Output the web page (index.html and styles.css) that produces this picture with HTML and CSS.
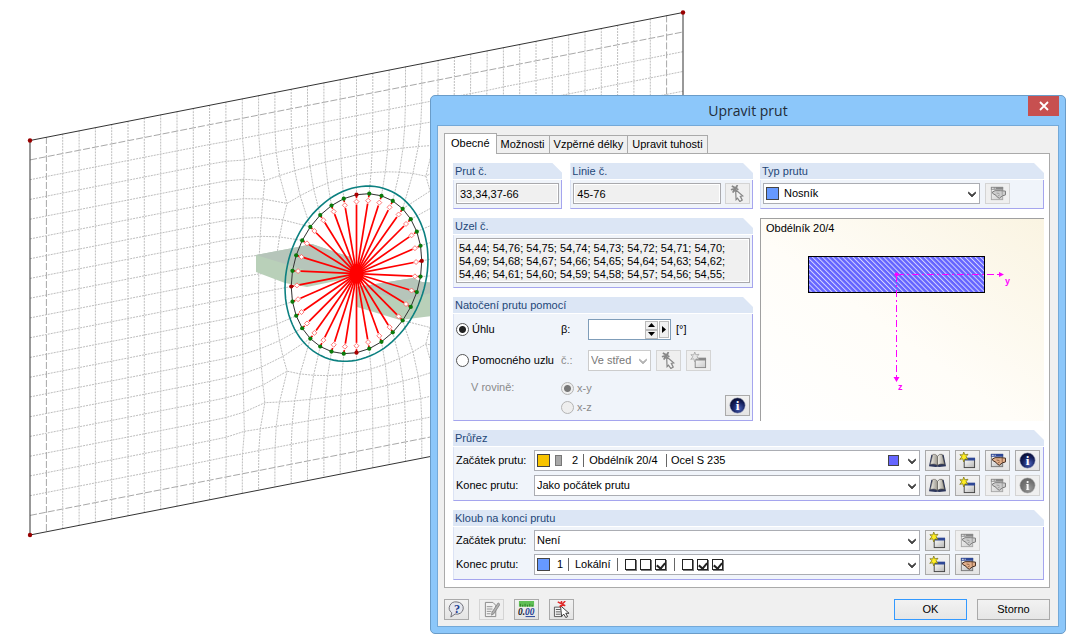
FILE: index.html
```html
<!DOCTYPE html>
<html lang="cs">
<head>
<meta charset="utf-8">
<title>Upravit prut</title>
<link rel="stylesheet" href="styles.css">
</head>
<body>
<svg class="defs" aria-hidden="true">
  <defs>
    <linearGradient id="pane" x1="0" y1="0" x2="1" y2="1"><stop offset="0" stop-color="#fff"/><stop offset="1" stop-color="#b4b4b4"/></linearGradient>
    <linearGradient id="page" x1="0" x2="1"><stop offset="0" stop-color="#f4f2ec"/><stop offset="1" stop-color="#9a968c"/></linearGradient>
    <radialGradient id="ball" cx=".6" cy=".7" r=".7"><stop offset="0" stop-color="#4a62b8"/><stop offset=".6" stop-color="#141f5c"/><stop offset="1" stop-color="#070c30"/></radialGradient>
    <symbol id="i-pick" viewBox="0 0 18 18"><path d="M3 1l7 4M9 0L5 7M2 5l7-2M4 8l3-6" stroke="#4a4438" stroke-width="1.800" fill="none"/><path d="M7 5l7.500 6.500-2.500.500 2 4-2.500 1.500-2.500-3.500-1.500 1.500z" fill="#f4f4f0" stroke="#4a4438" stroke-width="1.300"/></symbol>
    <symbol id="i-new" viewBox="0 0 18 18"><rect x="5.500" y="7.500" width="11" height="9" fill="url(#pane)" stroke="#444"/><path d="M5 6h12v3H5z" fill="#2e4796"/><path d="M5 0l1.200 3 3.300-.6-2 2.700 1.800 2.600-3-.4L5 10.500 4 7.200l-3.200.6 2.200-2.700-2-2.300 3 .3z" fill="#ffee22" stroke="#7c7414" stroke-width=".8"/></symbol>
    <symbol id="i-edit" viewBox="0 0 18 18"><rect x="2.500" y="2.500" width="12" height="13" fill="url(#pane)" stroke="#777"/><path d="M2 2h13v3H2z" fill="#2e4796"/><path d="M3 3.500h2M6 3.500h1" stroke="#fff"/><path d="M3.500 7.500l3-1.500h6l5 .5v4l-3.500 1-3 2.500-2-1-1.500-2-3.500-2z" fill="#e2b08c" stroke="#3c2418"/><path d="M8 8.500l3 .5M9.500 11.500l2-1M14 6.500v4" stroke="#7c4c30" stroke-width=".8"/></symbol>
    <symbol id="i-book" viewBox="0 0 18 18"><path d="M0 15L2.500 3l6 1 .5 11.500-2 .5zM18 15L15.500 3l-6 1L9 15.500l2 .5z" fill="#2c365c"/><path d="M1.500 13L4 2.500q3-1 5 2V14q-3-2-7.500-1z" fill="url(#page)" stroke="#66625a" stroke-width=".6"/><path d="M16.500 13L14 2.500q-3-1-5 2V14q3-2 7.500-1z" fill="url(#page)" stroke="#44413a" stroke-width=".6"/></symbol>
    <symbol id="i-info" viewBox="0 0 18 18"><circle cx="9" cy="9" r="8.200" fill="url(#ball)" stroke="#c4c8d8" stroke-width=".6"/><text x="9" y="14" text-anchor="middle" class="glyph-info">i</text></symbol>
    <symbol id="i-help" viewBox="0 0 18 18"><path d="M9.500 1a7 6.500 0 1 1-2 12.800L3 17l1-4.500A7 6.500 0 0 1 9.500 1z" fill="#e4e6ee" stroke="#6c6c74"/><text x="9.500" y="12.500" text-anchor="middle" class="glyph-help">?</text></symbol>
    <symbol id="i-note" viewBox="0 0 18 18"><path d="M2.500 1.500h8l3 3v12h-11z" fill="#f4f4f0" stroke="#44423a"/><path d="M4 6h6M4 8.500h6M4 11h5M4 13.500h4" stroke="#55534a"/><path d="M16 2l2 1.500-6.500 10L9 15l.5-3z" fill="#8a887c" stroke="#33312a" stroke-width=".8"/></symbol>
    <symbol id="i-units" viewBox="0 0 18 18"><path d="M1 0h16v6H1z" fill="#5fbf55"/><path d="M2.500 3v3M5 4v2M7.500 3v3M10 4v2M12.500 3v3M15 4v2" stroke="#2a7a24"/><text x="0" y="15" class="glyph-units">0.<tspan fill="#1c3a90">00</tspan></text><path d="M8 16.500h10" stroke="#1c3a90"/></symbol>
    <symbol id="i-clear" viewBox="0 0 18 18"><path d="M1.500 6.500h8v10h-8z" fill="#f4f4f4" stroke="#555"/><path d="M3 9h5M3 11.500h5M3 14h5" stroke="#555"/><path d="M8 5l9 8h-3.500l2 3.500-2 1-2-3.500L9 16z" fill="#fff" stroke="#333"/><path d="M5 1l8 4M13 0L7 6M9 0v6" stroke="#e02828" stroke-width="1.600"/></symbol>
    <symbol id="i-chev" viewBox="0 0 10 10"><path d="M1.500 3v1.500L5 8l3.500-3.500V3L5 6z" fill="#444" stroke="#444" stroke-width=".8"/></symbol>
    <pattern id="hatch" width="3.600" height="3.600" patternUnits="userSpaceOnUse" patternTransform="rotate(-45)"><rect width="4" height="4" fill="#6464ff"/><path d="M.5 0v4" stroke="#d4d4ff"/></pattern>
  </defs>
</svg>

<main class="workspace">
  <svg class="model" width="700" height="560" viewBox="0 0 700 560" role="img" aria-label="Model">
    <g id="mesh" class="mesh"></g>
    <path class="edge" d="M30 140.500L683 12.500V407L30 535z"/>
    <g class="node-end"><circle cx="30" cy="140.500" r="2.200"/><circle cx="30" cy="535" r="2.200"/><circle cx="683" cy="12.500" r="2.200"/></g>
    <g id="wheel"></g>
  </svg>

  <section class="dialog" role="dialog" aria-labelledby="dlg-title">
    <header class="titlebar">
      <h1 id="dlg-title">Upravit prut</h1>
      <button class="close" type="button" aria-label="Zavřít"><svg width="10" height="10" viewBox="0 0 10 10"><path d="M1 1l8 8M9 1L1 9" stroke="#fff" stroke-width="1.800"/></svg></button>
    </header>
    <form class="content">
      <nav class="tabs" role="tablist">
        <button type="button" role="tab" aria-selected="true" class="tab active">Obecné</button>
        <button type="button" role="tab" class="tab">Možnosti</button>
        <button type="button" role="tab" class="tab">Vzpěrné délky</button>
        <button type="button" role="tab" class="tab">Upravit tuhosti</button>
      </nav>

      <div class="panel">
        <div class="upper">
          <div class="stack">
            <div class="pair">
              <section class="group"><h2><label for="prut">Prut č.</label></h2>
                <div class="body line"><input id="prut" class="field" readonly value="33,34,37-66"></div></section>
              <section class="group"><h2><label for="linie">Linie č.</label></h2>
                <div class="body line"><input id="linie" class="field" readonly value="45-76"><button type="button" class="tool" disabled aria-label="Vybrat"><svg class="ico"><use href="#i-pick"/></svg></button></div></section>
            </div>
            <section class="group"><h2><label for="uzel">Uzel č.</label></h2>
              <div class="body"><textarea id="uzel" class="field area" readonly>54,44; 54,76; 54,75; 54,74; 54,73; 54,72; 54,71; 54,70;
54,69; 54,68; 54,67; 54,66; 54,65; 54,64; 54,63; 54,62;
54,46; 54,61; 54,60; 54,59; 54,58; 54,57; 54,56; 54,55;</textarea></div></section>
            <section class="group"><h2>Natočení prutu pomocí</h2>
              <div class="body rotation">
                <label class="radio"><input type="radio" name="mode" checked>Úhlu</label>
                <label for="beta">β:</label>
                <div class="controls">
                  <span class="spin"><input id="beta" type="text"><span class="steps"><button type="button" aria-label="Více"><svg width="7" height="4"><path d="M0 4l3.500-4L7 4z"/></svg></button><button type="button" aria-label="Méně"><svg width="7" height="4"><path d="M0 0l3.500 4L7 0z"/></svg></button></span><button type="button" class="more" aria-label="Další"><svg width="4" height="7"><path d="M0 0l4 3.500L0 7z"/></svg></button></span>
                  <span>[°]</span>
                </div>
                <label class="radio"><input type="radio" name="mode">Pomocného uzlu</label>
                <label for="cislo" class="dim">č.:</label>
                <div class="controls">
                  <span class="combo small"><select id="cislo" disabled><option>Ve střed</option></select><svg class="chev"><use href="#i-chev"/></svg></span>
                  <button type="button" class="tool" disabled aria-label="Vybrat uzel"><svg class="ico"><use href="#i-pick"/></svg></button>
                  <button type="button" class="tool" disabled aria-label="Nový uzel"><svg class="ico"><use href="#i-new"/></svg></button>
                </div>
                <span class="dim plane">V rovině:</span>
                <div class="planes">
                  <label class="radio dim"><input type="radio" name="plane" checked disabled>x-y</label>
                  <label class="radio dim"><input type="radio" name="plane" disabled>x-z</label>
                </div>
                <button type="button" class="tool info" aria-label="Informace"><svg class="ico"><use href="#i-info"/></svg></button>
              </div></section>
          </div>

          <div class="stack">
            <section class="group"><h2><label for="typ">Typ prutu</label></h2>
              <div class="body line type">
                <span class="combo"><span class="lead"><i class="sw blue"></i></span><select id="typ" class="after-swatch"><option>Nosník</option></select><svg class="chev"><use href="#i-chev"/></svg></span>
                <button type="button" class="tool" disabled aria-label="Upravit typ"><svg class="ico"><use href="#i-edit"/></svg></button>
              </div></section>
            <figure class="preview">
              <figcaption>Obdélník 20/4</figcaption>
              <svg width="270" height="160" viewBox="0 0 270 160" aria-hidden="true">
                <rect x="47.500" y="19.500" width="176" height="36" fill="url(#hatch)" stroke="#000"/>
                <g stroke="#ff00ff" fill="none" stroke-dasharray="7 3 2 3"><path d="M136 37.500h102"/><path d="M135.500 38v102"/></g>
                <g fill="#ff00ff"><circle cx="135.500" cy="37.500" r="2"/><path d="M238 35l5 2.500-5 2.500zM132.500 140l3 5 3-5z"/></g>
                <g class="axis"><text x="244" y="47">y</text><text x="137" y="153">z</text></g>
              </svg>
            </figure>
          </div>
        </div>

        <section class="group"><h2>Průřez</h2>
          <div class="body rows">
            <label for="pr1">Začátek prutu:</label>
            <span class="combo"><span class="lead"><i class="sw gold"></i><i class="bar"></i><span class="num wide">2</span><span class="cell">Obdélník 20/4</span></span><select id="pr1" class="after-section"><option>Ocel S 235</option></select><i class="sw violet trail"></i><svg class="chev"><use href="#i-chev"/></svg></span>
            <div class="tools"><button type="button" class="tool" aria-label="Knihovna"><svg class="ico"><use href="#i-book"/></svg></button><button type="button" class="tool" aria-label="Nový"><svg class="ico"><use href="#i-new"/></svg></button><button type="button" class="tool" aria-label="Upravit"><svg class="ico"><use href="#i-edit"/></svg></button><button type="button" class="tool" aria-label="Informace"><svg class="ico"><use href="#i-info"/></svg></button></div>
            <label for="pr2">Konec prutu:</label>
            <span class="combo"><select id="pr2"><option>Jako počátek prutu</option></select><svg class="chev"><use href="#i-chev"/></svg></span>
            <div class="tools"><button type="button" class="tool" aria-label="Knihovna"><svg class="ico"><use href="#i-book"/></svg></button><button type="button" class="tool" aria-label="Nový"><svg class="ico"><use href="#i-new"/></svg></button><button type="button" class="tool" disabled aria-label="Upravit"><svg class="ico"><use href="#i-edit"/></svg></button><button type="button" class="tool" disabled aria-label="Informace"><svg class="ico"><use href="#i-info"/></svg></button></div>
          </div></section>

        <section class="group"><h2>Kloub na konci prutu</h2>
          <div class="body rows tight">
            <label for="kl1">Začátek prutu:</label>
            <span class="combo"><select id="kl1"><option>Není</option></select><svg class="chev"><use href="#i-chev"/></svg></span>
            <div class="tools"><button type="button" class="tool" aria-label="Nový"><svg class="ico"><use href="#i-new"/></svg></button><button type="button" class="tool" disabled aria-label="Upravit"><svg class="ico"><use href="#i-edit"/></svg></button></div>
            <label for="kl2">Konec prutu:</label>
            <span class="combo"><span class="lead"><i class="sw blue"></i><span class="num">1</span></span><select id="kl2" class="after-number"><option>Lokální</option></select>
              <span class="checks"><input type="checkbox" aria-label="ux"><input type="checkbox" aria-label="uy"><input type="checkbox" aria-label="uz" checked></span>
              <span class="checks second"><input type="checkbox" aria-label="φx"><input type="checkbox" aria-label="φy" checked><input type="checkbox" aria-label="φz" checked></span>
              <svg class="chev"><use href="#i-chev"/></svg></span>
            <div class="tools"><button type="button" class="tool" aria-label="Nový"><svg class="ico"><use href="#i-new"/></svg></button><button type="button" class="tool" aria-label="Upravit"><svg class="ico"><use href="#i-edit"/></svg></button></div>
          </div></section>
      </div>

      <footer class="footer">
        <button type="button" class="tool" aria-label="Nápověda"><svg class="ico"><use href="#i-help"/></svg></button>
        <button type="button" class="tool" disabled aria-label="Poznámka"><svg class="ico"><use href="#i-note"/></svg></button>
        <button type="button" class="tool" aria-label="Jednotky"><svg class="ico"><use href="#i-units"/></svg></button>
        <button type="button" class="tool" aria-label="Výběr"><svg class="ico"><use href="#i-clear"/></svg></button>
        <span class="actions"><button type="button" class="push primary">OK</button><button type="button" class="push">Storno</button></span>
      </footer>
    </form>
  </section>
</main>
<script src="mesh.js"></script>
</body>
</html>
```
FILE: styles.css
```css
* { box-sizing: border-box; }
body {
  margin: 0;
  background: #fff;
  color: #000;
  font: 11px/13px "Liberation Sans", Arial, sans-serif;
}
button, input, select, textarea { font: inherit; color: inherit; margin: 0; border-radius: 0; }
h1, h2, figure { margin: 0; font-weight: normal; }
.defs { position: absolute; width: 0; height: 0; }
.workspace { position: relative; min-height: 100vh; overflow: hidden; }
.model { display: block; }

.mesh path { fill: none; stroke: #bebebe; stroke-dasharray: 2 1; }
.mesh .strong { stroke: #a8a8a8; stroke-dasharray: 7 2; }
.edge { fill: none; stroke: #333; }
.node-end { fill: #900; }
.ring-outer { fill: none; stroke: #0c8080; stroke-width: 1.6; }
.ring { fill: none; stroke: #333; }
.spoke { stroke: #f00; stroke-width: 1.7; }
.hinge { fill: #fff; stroke: #f55; stroke-width: .8; }
.dot { fill: #0a7a0a; }
.dot.main { fill: #a00; }
.tick { stroke: #e00; stroke-width: 1.6; }

/* Window frame */
.dialog {
  position: absolute;
  top: 95px;
  left: 430px;
  right: 2px;
  padding: 0 6px 6px;
  background: #8cc7fa;
  border: 1px solid #6a9cc8;
  border-radius: 5px;
}
.titlebar { display: flex; height: 29px; }
.titlebar h1 {
  flex: 1;
  text-align: center;
  font: 14px/30px "Open Sans", sans-serif;
  color: #222c38;
}
.close {
  align-self: flex-start;
  width: 31px;
  height: 20px;
  padding: 0;
  border: 0;
  background: #c75050;
  margin-left: -31px;
}
.close svg { display: block; margin: auto; }
.content { padding: 7px 8px 6px 6px; background: #f0f0f0; border: 1px solid #74a9d8; }

/* Tabs */
.tabs { display: flex; align-items: flex-end; height: 20px; }
.tab {
  height: 18px;
  padding: 0 4px;
  border: 1px solid #aaa;
  border-left-width: 0;
  border-bottom: 0;
  background: #f0f0f0;
  line-height: 17px;
  white-space: nowrap;
}
.tab.active {
  position: relative;
  height: 21px;
  margin-bottom: -1px;
  padding: 0 6px 2px;
  border-left-width: 1px;
  background: #fff;
}
.panel {
  display: flex;
  flex-direction: column;
  gap: 9px;
  padding: 9px 5px 7px 8px;
  border: 1px solid #aaa;
  background: #fff;
}
.upper { display: grid; grid-template-columns: 300fr 284fr; gap: 7px; }
.stack { display: flex; flex-direction: column; gap: 9px; min-width: 0; }
.pair { display: grid; grid-template-columns: 109fr 182fr; gap: 8px; }

/* Groups */
.group { min-width: 0; }
.group h2 {
  height: 17px;
  padding-left: 2px;
  border-bottom: 1px solid #fff;
  background: #dce6f5;
  clip-path: polygon(0 0, calc(100% - 10px) 0, 100% 10px, 100% 100%, 0 100%);
  font-size: 11px;
  line-height: 16px;
  color: #1e4678;
}
.body {
  padding: 3px 2px 4px;
  border: solid #a5a5ee;
  border-width: 0 1px 1px 0;
  border-left: 1px solid #dce3f5;
  background: #f0f4fa;
}
.line { display: flex; gap: 4px; }
.type { gap: 5px; padding-right: 33px; }
.field {
  flex: 1;
  min-width: 0;
  width: 100%;
  height: 21px;
  padding: 0 3px;
  border: 1px solid #a9a9ad;
  outline: 1px solid #fff;
  outline-offset: -2px;
  background: #f0f0f0;
}
.area { display: block; height: 45px; padding: 3px 2px; resize: none; overflow: hidden; white-space: pre; }
.tool {
  flex: none;
  display: grid;
  place-items: center;
  width: 25px;
  height: 21px;
  padding: 0;
  border: 1px solid #aaa;
  background: linear-gradient(#f2f2f2, #e4e4e4);
}
.tool:disabled { border-color: #d4d4d4; background: #efefef; }
.ico { width: 17px; height: 17px; }
.tool:disabled .ico { filter: grayscale(1); opacity: .6; }
.glyph-info { font: bold 14px "Liberation Serif", serif; fill: #fff; }
.glyph-help { font: bold 13px "Liberation Serif", serif; fill: #1c3a90; }
.glyph-units { font: italic bold 10px "Liberation Serif", serif; fill: #222; }

/* Combo boxes */
.combo { position: relative; display: grid; flex: 1; min-width: 0; }
.combo > * { grid-area: 1 / 1; }
.combo select {
  width: 100%;
  height: 21px;
  padding: 0 20px 0 2px;
  border: 1px solid #abadb3;
  background: #fff;
  appearance: none;
}
.combo select:disabled { opacity: 1; color: #777; border-color: #ccc; }
.combo .after-swatch { padding-left: 20px; }
.combo .after-section { padding-left: 136px; }
.combo .after-number { padding-left: 40px; }
.chev { z-index: 1; width: 10px; height: 10px; margin-right: 3px; place-self: center end; pointer-events: none; }
.small { flex: none; width: 63px; }
.small select { padding-right: 13px; }
.small .chev { opacity: .4; }
.lead { z-index: 1; justify-self: start; display: flex; align-items: center; padding-left: 3px; pointer-events: none; }
.sw { width: 13px; height: 13px; border: 1px solid #444; }
.blue { background: #6699ff; }
.gold { background: #f8c400; }
.violet { background: #6666ff; }
.trail { z-index: 1; width: 11px; height: 11px; margin-right: 21px; place-self: center end; }
.bar { width: 7px; height: 11px; margin-left: 5px; border: 1px solid #777; background: #a8a8a8; }
.num { padding: 0 5px 0 7px; border-right: 1px solid #666; }
.num.wide { padding-left: 10px; padding-right: 5px; }
.cell { width: 83px; padding-left: 5px; border-right: 1px solid #666; white-space: nowrap; }
.checks { z-index: 1; display: flex; align-items: center; gap: 4px; place-self: center start; height: 13px; margin-left: 83px; padding-left: 7px; border-left: 1px solid #666; }
.checks.second { margin-left: 140px; padding-left: 7px; }
.checks input {
  appearance: none;
  display: grid;
  place-items: center;
  width: 11px;
  height: 11px;
  border: 1px solid #222;
  background: #fff;
  box-shadow: 1px 1px 0 #777;
}
.checks input:checked::before {
  content: "";
  width: 4px;
  height: 6px;
  border: solid #222;
  border-width: 0 2px 2px 0;
  transform: rotate(40deg);
}

/* Rotation */
.rotation {
  display: grid;
  grid-template-columns: 105px 27px 1fr auto;
  row-gap: 10px;
  align-items: center;
  padding-top: 5px;
}
.radio { display: flex; align-items: center; gap: 3px; height: 14px; white-space: nowrap; }
.radio input {
  appearance: none;
  flex: none;
  width: 13px;
  height: 13px;
  border: 1px solid #555;
  border-radius: 50%;
  background: #fff;
}
.radio input:checked { background: radial-gradient(circle, #222 3px, #fff 4px); }
.radio input:disabled { border-color: #b4b4b4; background: #eee; }
.radio input:disabled:checked { background: radial-gradient(circle, #777 3px, #eee 4px); }
.dim { color: #8a8a8a; }
.controls { grid-column: 3 / 5; display: flex; align-items: center; gap: 5px; }
.spin { display: flex; align-items: center; width: 83px; height: 21px; padding: 1px; border: 1px solid #7f9db9; background: #fff; }
.spin > input { flex: 1; min-width: 0; height: 17px; padding: 0 2px; border: 0; }
.steps { display: grid; width: 13px; margin-right: 1px; }
.spin button { display: grid; place-items: center; height: 9px; padding: 0; border: 1px solid #bbb; background: #f0f0f0; }
.spin .more { width: 10px; height: 17px; }
.plane { padding-left: 15px; align-self: start; }
.planes { grid-column: 2 / 4; display: flex; flex-direction: column; gap: 5px; padding-bottom: 2px; }
.info { align-self: end; }

.preview {
  flex: 1;
  padding: 2px 0 0;
  border: solid #a0a0a0;
  border-width: 1px 0 0 1px;
  background: linear-gradient(to top right, #fff, #fffdf8 45%, #faf4e2);
}
.preview figcaption { height: 16px; padding-left: 5px; line-height: 15px; }
.preview svg { display: block; }
.axis { fill: #f0f; font: bold 9px "Liberation Sans", sans-serif; }

.rows { display: grid; grid-template-columns: 78px 1fr 121px; row-gap: 4px; align-items: center; }
.tight { row-gap: 3px; }
.tools { display: flex; gap: 5px; margin-left: 5px; }

.footer { display: flex; gap: 10px; padding-top: 11px; }
.actions { display: flex; gap: 10px; margin-left: auto; }
.push { width: 73px; height: 21px; padding: 0; border: 1px solid #aaa; background: linear-gradient(#f2f2f2, #e6e6e6); }
.primary { border-color: #3399ff; }
```
FILE: mesh.js
```javascript
// Plate of 40 x 20 cells with a circular opening of radius 4 cells in its middle.
const NS = "http://www.w3.org/2000/svg";
const CX = 356.5, CY = 273.7, CELL_X = 16.32, CELL_Y = 19.75, SHEAR = -0.196;

function project(a, b) {
  const u = a * CELL_X;
  return [CX + u, CY + b * CELL_Y + u * SHEAR];
}

// Pulls the square grid towards the round opening.
function relax(a, b) {
  const m = Math.max(Math.abs(a), Math.abs(b));
  if (m < 4) return null;
  const t = Math.min(1, (m - 4) / 5), w = Math.pow(1 - t, 3);
  const k = Math.abs(a) > Math.abs(b) ? b / a : a / b;
  const ang = k * Math.PI / 4;
  let ca, cb;
  if (Math.abs(a) > Math.abs(b)) { ca = Math.sign(a) * m * Math.cos(ang); cb = Math.sign(a) * m * Math.sin(ang); }
  else { cb = Math.sign(b) * m * Math.cos(ang); ca = Math.sign(b) * m * Math.sin(ang); }
  return [a + (ca - a) * w, b + (cb - b) * w];
}

function add(parent, name, attrs) {
  const el = document.createElementNS(NS, name);
  for (const k in attrs) el.setAttribute(k, attrs[k]);
  parent.appendChild(el);
}

function gridLine(points) {
  let d = "", pen = false;
  for (const [a, b] of points) {
    const r = relax(a, b);
    if (!r) { pen = false; continue; }
    const [x, y] = project(r[0], r[1]);
    d += (pen ? "L" : "M") + x.toFixed(1) + " " + y.toFixed(1);
    pen = true;
  }
  return d;
}

const mesh = document.getElementById("mesh");
for (let b = -9; b <= 9; b++) {
  const pts = [];
  for (let a = -20; a <= 20; a++) pts.push([a, b]);
  add(mesh, "path", { d: gridLine(pts), class: Math.abs(b) === 9 ? "strong" : "" });
}
for (let a = -19; a <= 19; a++) {
  const pts = [];
  for (let b = -10; b <= 10; b++) pts.push([a, b]);
  add(mesh, "path", { d: gridLine(pts), class: Math.abs(a) === 19 ? "strong" : "" });
}

function onCircle(r, ang) { return project(r * Math.sin(ang), -r * Math.cos(ang)); }
function circlePath(r) {
  let d = "";
  for (let i = 0; i < 96; i++) d += (i ? "L" : "M") + onCircle(r, i * Math.PI / 48).map(v => v.toFixed(1)).join(" ");
  return d + "z";
}

const wheel = document.getElementById("wheel");
add(wheel, "path", { d: circlePath(4), fill: "#fff" });
add(wheel, "path", { d: "M256 255L293 248L312 244L350 257L357 274L350 278L307 287L285 283L256 272z M357 287L413 278L422 282L440 283V315L400 320L357 307z", fill: "#b9d0b9" });
add(wheel, "path", { d: "M256 255L293 248L312 244L350 257L357 274L305 270z M357 287L413 278L422 282L440 283V290L404 301z", fill: "#b6c5ba" });
add(wheel, "path", { d: circlePath(4.38), class: "ring-outer" });

let ring = "";
for (let k = 0; k < 32; k++) ring += (k ? "L" : "M") + onCircle(4, k * Math.PI / 16).join(" ");
add(wheel, "path", { d: ring + "z", class: "ring" });
for (let k = 0; k < 32; k++) {
  const ang = k * Math.PI / 16;
  const [sx, sy] = onCircle(3.5, ang), [hx, hy] = onCircle(3.65, ang);
  const [tx, ty] = onCircle(3.82, ang), [ex, ey] = onCircle(4, ang);
  add(wheel, "path", { d: `M${CX} ${CY}L${sx} ${sy}`, class: "spoke" });
  add(wheel, "path", { d: `M${hx - 2.5} ${hy}l2.500 -2.500l2.500 2.500l-2.500 2.500z`, class: "hinge" });
  add(wheel, "path", { d: `M${tx} ${ty}L${ex} ${ey}`, class: "tick" });
  add(wheel, "circle", { cx: ex, cy: ey, r: 2.1, class: k % 8 ? "dot" : "dot main" });
}
add(wheel, "ellipse", { cx: CX, cy: CY, rx: 7, ry: 10, fill: "#f00" });
```
